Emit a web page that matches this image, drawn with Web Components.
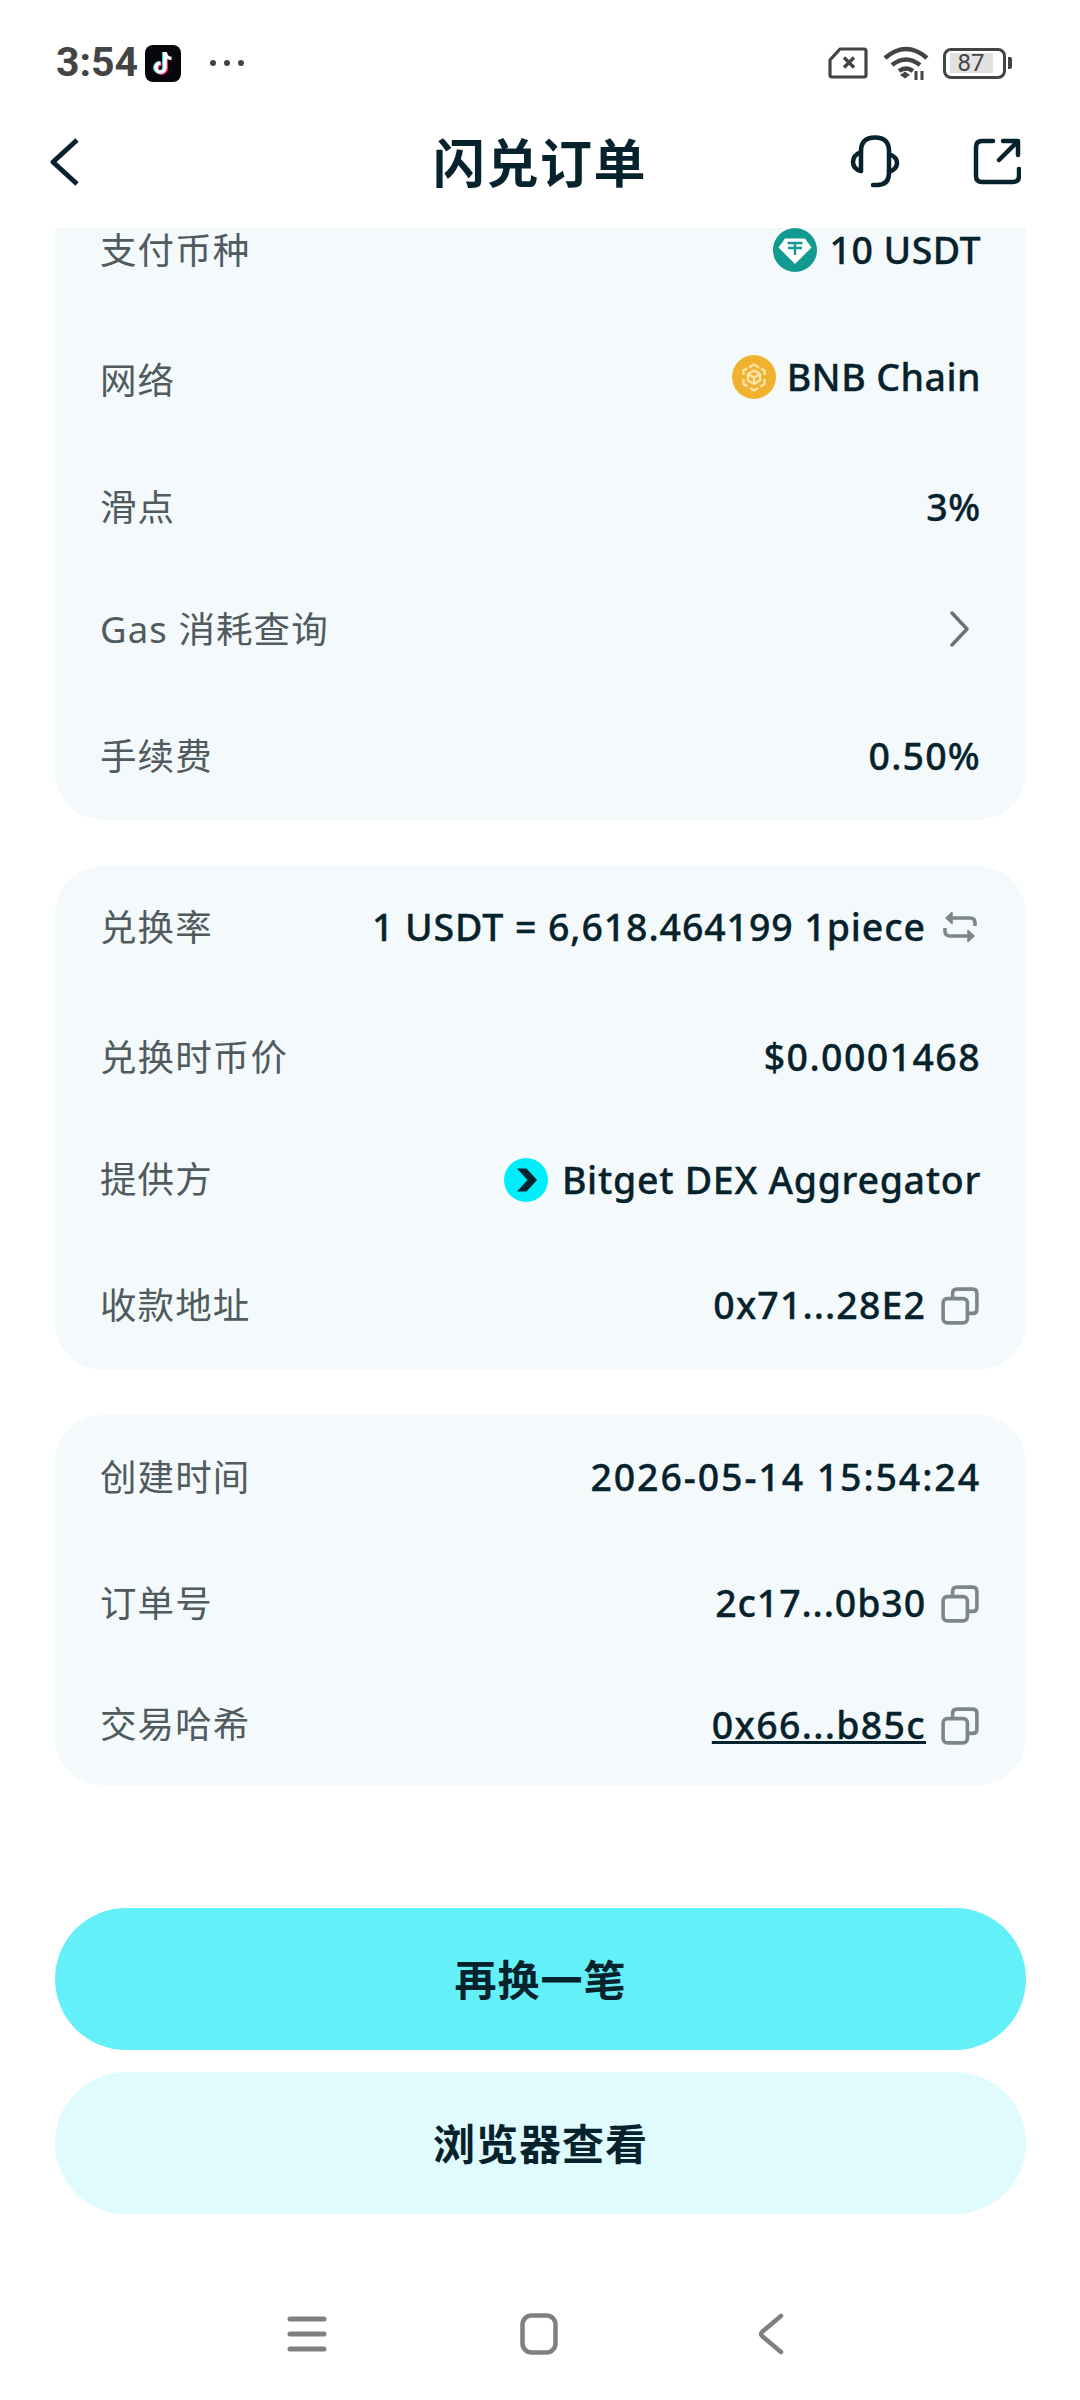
<!DOCTYPE html>
<html lang="zh">
<head>
<meta charset="utf-8">
<title>闪兑订单</title>
<style>
  html, body { margin: 0; padding: 0; background: #fff; }
  body { width: 1080px; height: 2400px; overflow: hidden; font-family: "Noto Sans", "Noto Sans CJK SC", sans-serif; color: #06222c; }
</style>
</head>
<body>
<swap-order-page>
  <phone-status-bar></phone-status-bar>
  <order-title-bar></order-title-bar>

  <info-card pad-top="1" pad-bottom="41" clipped>
    <info-row label="支付币种" top="0" dy="-1" ls="0.450">
      <svg slot="icon" style="margin-right:13px" width="44" height="44" viewBox="0 0 44 44">
        <circle cx="22" cy="22" r="22" fill="#139a90"/>
        <path d="M12 10.500h20l6.500 9L22 36 5.500 19.500z" fill="#fff"/>
        <path d="M14.500 15h15M22 15v12M15 20h14" stroke="#139a90" stroke-width="2.400" fill="none"/>
      </svg>
      10 USDT
    </info-row>
    <info-row label="网络" top="86" dy="-4" ls="0.450">
      <svg slot="icon" style="margin-right:11px" width="44" height="44" viewBox="0 0 44 44">
        <circle cx="22" cy="22" r="22" fill="#f1b32f"/>
        <g fill="none" stroke="#fbe3a9" stroke-width="2.400" stroke-linejoin="round">
          <path d="M17 12.500l5-3 5 3M11.500 20v-4.500l3.500-2M32.500 20v-4.500l-3.500-2M11.500 24v5l4 2.500M32.500 24v5l-4 2.500M18 33l4 2.500 4-2.500"/>
          <path d="M22 15.500l6 3.500v6.500L22 29l-6-3.500V19zM16 19l6 3.500 6-3.500M22 22.500V29"/>
        </g>
      </svg>
      BNB Chain
    </info-row>
    <info-row label="滑点" top="83">3%</info-row>
    <info-row label="Gas 消耗查询" top="78">
      <svg style="margin-right:9px;display:block" width="26" height="36" viewBox="0 0 26 36" fill="none" stroke="#667275" stroke-width="3.400" stroke-linecap="round" stroke-linejoin="round"><path d="M6 2l15 16L6 34"/></svg>
    </info-row>
    <info-row label="手续费" top="83" ls="1.200">0.50%</info-row>
  </info-card>

  <info-card pad-top="40" pad-bottom="42" gap="46">
    <info-row label="兑换率" top="0" ls="0.900">
      1 USDT = 6,618.464199 1piece
      <svg slot="tail" style="margin-right:2px" width="38" height="34" viewBox="0 0 36 34" fill="none" stroke="#7b8789" stroke-width="3.600" stroke-linejoin="round">
        <path d="M9 8h19q5 0 5 5v3M27 26H8q-5 0-5-5v-3"/>
        <path d="M10 2.500L4 8l6 5.500zM26 20.500L32 26l-6 5.500z" fill="#7b8789" stroke-width="1.500"/>
      </svg>
    </info-row>
    <info-row label="兑换时币价" top="86" ls="1.400">$0.0001468</info-row>
    <info-row label="提供方" top="78" dy="0">
      <svg slot="icon" width="44" height="44" viewBox="0 0 44 44">
        <circle cx="22" cy="22" r="22" fill="#00eefc"/>
        <path d="M13 10.500h9.500L33 22 22.500 33.500H13L23.500 22z" fill="#06222c"/>
      </svg>
      Bitget DEX Aggregator
    </info-row>
    <info-row label="收款地址" top="82" ls="1.100">0x71...28E2<copy-icon slot="tail"></copy-icon></info-row>
  </info-card>

  <info-card pad-top="41" pad-bottom="38" gap="45">
    <info-row label="创建时间" top="0" ls="1.900">2026-05-14 15:54:24</info-row>
    <info-row label="订单号" top="82" ls="0.900">2c17...0b30<copy-icon slot="tail"></copy-icon></info-row>
    <info-row label="交易哈希" top="77" ls="1.300" dy="0"><u>0x66...b85c</u><copy-icon slot="tail"></copy-icon></info-row>
  </info-card>

  <action-button kind="primary" style="margin-top:123px">再换一笔</action-button>
  <action-button kind="soft" style="margin-top:22px">浏览器查看</action-button>

  <system-nav></system-nav>
</swap-order-page>

<script>
// small helper so every element gets an open shadow root with its own style
class BaseEl extends HTMLElement {
  constructor() {
    super();
    this.attachShadow({ mode: 'open' });
  }
  connectedCallback() {
    this.shadowRoot.innerHTML = this.render();
  }
}

class SwapOrderPage extends BaseEl {
  render() {
    return `<style>
      :host { display: flex; flex-direction: column; width: 1080px; height: 2400px; }
    </style><slot></slot>`;
  }
}

class PhoneStatusBar extends BaseEl {
  render() {
    return `<style>
      :host { display: flex; align-items: center; height: 126px; padding: 0 68px 0 56px; box-sizing: border-box; color: #444; }
      .time { font: 700 41px/1 Roboto, "Noto Sans", sans-serif; margin-right: 7px; position: relative; top: -1px; }
      .dots { margin-left: 29px; display: flex; gap: 8px; }
      .dots i { width: 6px; height: 6px; border-radius: 50%; background: #444; display: block; }
      .push { flex: 1; }
      .right { display: flex; align-items: center; }
      .batt { width: 63px; height: 31px; border: 3px solid #444; border-radius: 8px; box-sizing: border-box; margin-left: 14px; display: flex; align-items: center; justify-content: center; font: 400 24px/1 Roboto, sans-serif; }
      .batt b { font-weight: 400; background: #e2e2e2; width: 43px; text-align: center; height: 20px; line-height: 20px; margin-left: -7px; color: #444; }
      .cap { width: 4px; height: 12px; background: #444; border-radius: 0 2px 2px 0; margin-left: 2px; }
      :host > * { flex-shrink: 0; }
    </style>
    <span class="time">3:54</span>
    <svg width="36" height="37" viewBox="0 0 36 37">
      <rect width="36" height="37" rx="8" fill="#08060d"/>
      <path d="M20 7v15.500a4.500 4.500 0 1 1-4.500-4.500" fill="none" stroke="#25e4e0" stroke-width="4" transform="translate(-1 0)"/>
      <path d="M20 7v15.500a4.500 4.500 0 1 1-4.500-4.500" fill="none" stroke="#f5305c" stroke-width="4" transform="translate(1 1)"/>
      <path d="M20 7v15.500a4.500 4.500 0 1 1-4.500-4.500M20 8q1 5 6.500 5.500" fill="none" stroke="#fff" stroke-width="3.600"/>
    </svg>
    <div class="dots"><i></i><i></i><i></i></div>
    <div class="push"></div>
    <div class="right">
      <svg width="40" height="32" viewBox="0 0 40 32" fill="none" stroke="#444" stroke-width="3.200" stroke-linejoin="round">
        <path d="M12 2h24q2 0 2 2v24q0 2-2 2H4q-2 0-2-2V13z"/>
        <path d="M16 10.500l10 10M26 10.500l-10 10" stroke-width="3.400"/>
      </svg>
      <svg width="46" height="36" viewBox="0 0 46 36" fill="none" stroke="#444" stroke-width="4.500" style="margin-left:15px">
        <path d="M2 13q21-18 42 0M9 20q14-11 28 0M16 26q7-5 14 0"/>
        <path d="M17 30l5-3.500 5 3.500-5 3.500z" fill="#444" stroke="none"/>
        <path d="M33 26v9M39 26v9" stroke-width="3"/>
      </svg>
      <div class="batt"><b>87</b></div>
      <div class="cap"></div>
    </div>`;
  }
}

class OrderTitleBar extends BaseEl {
  render() {
    return `<style>
      :host { display: flex; align-items: center; justify-content: space-between; height: 102px; padding: 0 59px 0 49px; box-sizing: border-box; position: relative; color: #06222c; flex-shrink: 0; }
      h1 { position: absolute; left: 0; right: 0; top: 0; margin: 0; text-align: center; font: 700 52px/70px "Noto Sans CJK SC", sans-serif; letter-spacing: 1.500px; pointer-events: none; }
      .icons { display: flex; align-items: center; gap: 72px; }
      svg { display: block; fill: none; stroke: #06222c; stroke-width: 4.500; stroke-linecap: round; stroke-linejoin: round; }
      :host > svg, .icons { position: relative; top: -15px; }
    </style>
    <svg width="32" height="50" viewBox="0 0 32 50"><path d="M28 3L4 25l24 22" stroke-linecap="butt" stroke-width="5"/></svg>
    <h1>闪兑订单</h1>
    <div class="icons">
      <svg width="52" height="54" viewBox="0 0 52 54">
        <path d="M12 36V16C12 7 17 2.500 26 2.500S40 7 40 16v22q0 12-12 12h-4"/>
        <path d="M12 17q-8 3-8 10t8 9M40 19q8 3 8 9t-8 9"/>
      </svg>
      <svg width="48" height="48" viewBox="0 0 48 48">
        <path d="M20 3H9Q3 3 3 9v29q0 6 6 6h31q6 0 6-6V31"/>
        <path d="M26 22L44 4M30 3h15v14"/>
      </svg>
    </div>`;
  }
}

class InfoCard extends BaseEl {
  render() {
    const top = this.getAttribute('pad-top') || 40;
    const bottom = this.getAttribute('pad-bottom') || 40;
    const gap = this.getAttribute('gap') || 0;
    const radius = this.hasAttribute('clipped') ? '0 0 48px 48px' : '48px';
    return `<style>
      :host { display: flex; flex-direction: column; margin: ${gap}px 54px 0 55px; padding: ${top}px 45px ${bottom}px 45px; background: #f4f9fb; border-radius: ${radius}; flex-shrink: 0; }
    </style><slot></slot>`;
  }
}

class InfoRow extends BaseEl {
  render() {
    const top = this.getAttribute('top') || 0;
    const dy = this.getAttribute('dy') || -1;
    const ls = this.getAttribute('ls') || 0.7;
    return `<style>
      :host { display: flex; align-items: center; justify-content: space-between; height: 44px; margin-top: ${top}px; }
      .label { font: 400 36.500px/44px "Noto Sans", "Noto Sans CJK SC", sans-serif; letter-spacing: 1.100px; color: #4f5b5e; white-space: nowrap; position: relative; top: -1px; }
      .value { display: flex; align-items: center; font: 500 37.500px/44px "Noto Sans", "Noto Sans CJK SC", sans-serif; letter-spacing: ${ls}px; -webkit-text-stroke: 0.300px #06222c; color: #06222c; white-space: nowrap; position: relative; top: ${dy}px; }
      ::slotted([slot="icon"]) { margin-right: 14px; flex-shrink: 0; }
      ::slotted([slot="tail"]) { margin-left: 15px; flex-shrink: 0; }
    </style>
    <span class="label">${this.getAttribute('label')}</span>
    <span class="value"><slot name="icon"></slot><span><slot></slot></span><slot name="tail"></slot></span>`;
  }
}

class CopyIcon extends BaseEl {
  render() {
    return `<style>:host { display: block; width: 38px; height: 38px; margin-right: 2px; } svg { display: block; position: relative; top: 1px; }</style>
    <svg width="38" height="38" viewBox="0 0 36 36" fill="none" stroke="#7b8789" stroke-width="3.400" stroke-linejoin="round">
      <rect x="2" y="11" width="23" height="23" rx="4"/>
      <path d="M11 10V6q0-4 4-4h15q4 0 4 4v15q0 4-4 4h-4"/>
    </svg>`;
  }
}

class ActionButton extends BaseEl {
  render() {
    const soft = this.getAttribute('kind') === 'soft';
    return `<style>
      :host { display: flex; align-items: center; justify-content: center; height: 142px; padding-bottom: 2px; box-sizing: border-box; margin: 0 54px 0 55px; border-radius: 71px; background: ${soft ? '#e0fbfd' : '#64f0f8'}; color: #06222c; font: 700 42px/1 "Noto Sans CJK SC", sans-serif; letter-spacing: 1px; flex-shrink: 0; }
    </style><slot></slot>`;
  }
}

class SystemNav extends BaseEl {
  render() {
    return `<style>
      :host { display: flex; align-items: center; margin-top: 99px; padding-left: 287px; flex-shrink: 0; }
      svg { display: block; fill: none; stroke: #808080; stroke-linecap: round; stroke-linejoin: round; }
      .home { margin: 0 200px 0 193px; }
    </style>
    <svg width="40" height="40" viewBox="0 0 40 40" stroke-width="5"><path d="M3 5h34M3 20h34M3 35h34"/></svg>
    <svg class="home" width="38" height="42" viewBox="0 0 38 42" stroke-width="4.500"><rect x="2.500" y="2.500" width="33" height="37" rx="9"/></svg>
    <svg width="26" height="42" viewBox="0 0 26 42" stroke-width="4.500"><path d="M23 3L4 19q-2 2 0 4l19 16"/></svg>`;
  }
}

customElements.define('swap-order-page', SwapOrderPage);
customElements.define('phone-status-bar', PhoneStatusBar);
customElements.define('order-title-bar', OrderTitleBar);
customElements.define('info-card', InfoCard);
customElements.define('info-row', InfoRow);
customElements.define('copy-icon', CopyIcon);
customElements.define('action-button', ActionButton);
customElements.define('system-nav', SystemNav);
</script>
</body>
</html>
